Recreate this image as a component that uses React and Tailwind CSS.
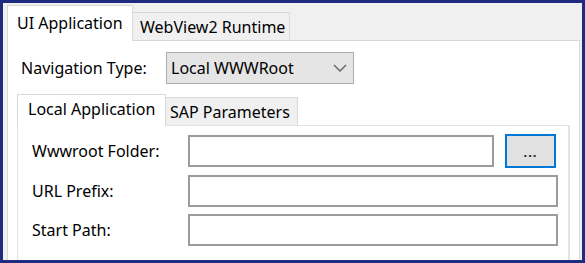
import React from "react";

const Field = ({ label, children }) => (
  <div className="flex items-center">
    <div className="w-[156px] shrink-0">{label}</div>
    {children}
  </div>
);

const App = () => {
  return (
    <div className="w-[585px] h-[263px] overflow-hidden border-[3px] border-[#1f2b7e] bg-[#f0f0f0] pl-1 pr-[2px] pt-[2px] font-['Noto_Sans',sans-serif] text-[16px] text-black">
      {/* outer tabs */}
      <div className="flex h-[35px] items-end">
        <div className="relative z-10 -mb-px h-[36px] w-[126px] border border-b-0 border-[#d9d9d9] bg-white pl-[9px] pt-[6px] leading-[22px]">
          UI Application
        </div>
        <div className="h-[28px] w-[157px] border border-b-0 border-l-0 border-[#d9d9d9] pl-[7px] pt-[3px] leading-[22px]">
          WebView2 Runtime
        </div>
      </div>

      {/* outer page */}
      <div className="h-[300px] border border-[#d9d9d9] bg-white px-[9px] pt-[11px]">
        <div className="flex items-center pl-1">
          <div className="w-[145px] shrink-0">Navigation Type:</div>
          <div className="flex h-[32px] w-[188px] items-center justify-between border-[1.5px] border-[#adadad] bg-[#e5e5e5] pl-[4px] pr-[6px]">
            <span>Local WWWRoot</span>
            <svg width="14" height="8" viewBox="0 0 14 8" fill="none">
              <polyline points="1,1 7,7 13,1" stroke="#606060" strokeWidth="1.3" />
            </svg>
          </div>
        </div>

        {/* inner tabs */}
        <div className="mt-[10px] flex h-[31px] items-end">
          <div className="relative z-10 -mb-px h-[32px] w-[149px] border border-b-0 border-[#d9d9d9] bg-white pl-[10px] pt-[3px] leading-[22px]">
            Local Application
          </div>
          <div className="h-[28px] w-[132px] border border-b-0 border-l-0 border-[#d9d9d9] bg-[#f0f0f0] pl-[4px] pt-[3px] leading-[22px]">
            SAP Parameters
          </div>
        </div>

        <div className="h-[200px] border-2 border-[#e3e3e3] border-t border-l pl-[14px] pr-[10px] pt-[8px]">
          <div className="flex flex-col gap-[7px]">
            <Field label="Wwwroot Folder:">
              <div className="flex h-[34px] items-center gap-[11px]">
                <div className="h-[32px] w-[306px] border-2 border-[#9c9c9c] bg-white"></div>
                <button className="flex h-[34px] w-[51px] items-end justify-center border-2 border-[#0078d7] bg-[#e1e1e1] pb-[7px] text-[13px] leading-none font-bold tracking-[1px] text-[#222]">
                  ...
                </button>
              </div>
            </Field>
            <Field label="URL Prefix:">
              <div className="h-[32px] w-[370px] border-2 border-[#9c9c9c] bg-white"></div>
            </Field>
            <Field label="Start Path:">
              <div className="h-[32px] w-[370px] border-2 border-[#9c9c9c] bg-white"></div>
            </Field>
          </div>
        </div>
      </div>
    </div>
  );
};

export default App;
